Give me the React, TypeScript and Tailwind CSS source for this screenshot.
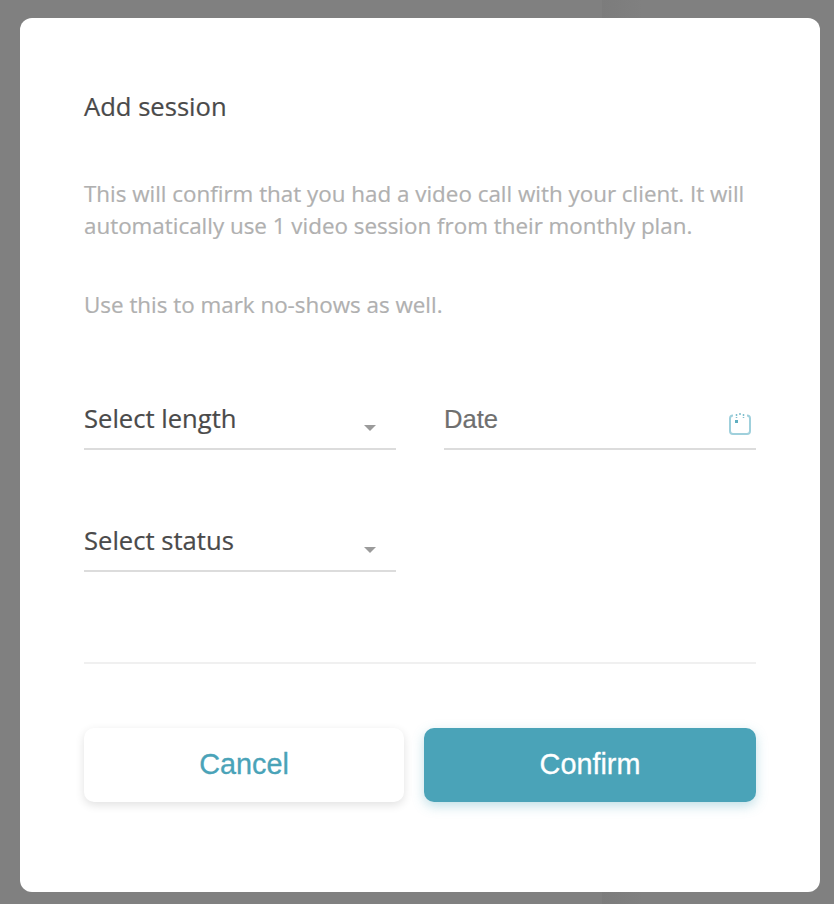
function Caret() {
  return <span className="mt-[17px] h-0 w-0 border-x-[6px] border-t-[6px] border-x-transparent border-t-[#9b9b9b]" />;
}

function SelectField({ label }: { label: string }) {
  return (
    <div className="flex h-[62px] w-[312px] items-center justify-between border-b-2 border-[#dcdcdc] pt-[2px] pr-[20px]">
      <span className="text-[25.6px] text-[#4a4a4a] [-webkit-text-stroke:0.2px]">{label}</span>
      <Caret />
    </div>
  );
}

function CalendarIcon() {
  return (
    <svg width="24" height="24" viewBox="0 0 24 24" fill="none" stroke="#9fd0dc" strokeWidth="2" className="mt-[10px]">
      <path d="M5 3.500C3 3.500 2 4.500 2 6.500V19C2 21 3 22 5 22H19C21 22 22 21 22 19V6.500C22 4.500 21 3.500 19 3.500" />
      <path d="M8.500 2V6M12 1V3.500M15.500 2V6" strokeWidth="1.500" stroke="#7fbecd" strokeDasharray="2 1" />
      <rect x="7" y="8" width="3" height="3" fill="#5faec0" stroke="none" />
    </svg>
  );
}

export default function App() {
  return (
    <div className="relative h-[904px] w-[834px] overflow-hidden bg-[#808080] pl-[20px] pt-[18px] font-['Open_Sans',sans-serif]">
      <div className="absolute inset-y-0 left-[602px] w-[40px] bg-gradient-to-r from-[#7c7c7c] to-[#808080]" />
      <div className="relative flex h-[874px] w-[800px] flex-col rounded-[12px] bg-white px-[64px]">
        <h2 className="mt-[72px] text-[25.6px] leading-[34px] text-[#4a4a4a] [-webkit-text-stroke:0.2px]">Add session</h2>
        <p className="mt-[54px] text-[22.4px] leading-[32px] text-[#b0b0b0] [-webkit-text-stroke:0.2px]">
          This will confirm that you had a video call with your client. It will automatically use 1 video session from their monthly plan.
        </p>
        <p className="mt-[47px] text-[22.4px] leading-[32px] text-[#b0b0b0] [-webkit-text-stroke:0.2px]">Use this to mark no-shows as well.</p>
        <div className="mt-[67px] flex gap-[48px]">
          <SelectField label="Select length" />
          <div className="flex h-[62px] w-[312px] items-center justify-between border-b-2 border-[#dcdcdc] pt-[2px] pr-[4px]">
            <span className="font-['Liberation_Sans',sans-serif] text-[25.6px] text-[#6f6f6f] [-webkit-text-stroke:0.2px]">Date</span>
            <CalendarIcon />
          </div>
        </div>
        <div className="mt-[60px]">
          <SelectField label="Select status" />
        </div>
        <div className="mt-[90px] border-t-2 border-[#f0f0f0]" />
        <div className="mt-[64px] flex gap-[20px] font-['Liberation_Sans',sans-serif] text-[28.8px] [-webkit-text-stroke:0.3px]">
          <button className="h-[74px] w-[320px] rounded-[10px] bg-white text-[#4aa3b8] shadow-[0_3px_10px_rgba(0,0,0,0.12)]">Cancel</button>
          <button className="h-[74px] w-[332px] rounded-[10px] bg-[#4aa3b8] text-white shadow-[0_4px_12px_rgba(74,163,184,0.35)]">Confirm</button>
        </div>
      </div>
    </div>
  );
}
